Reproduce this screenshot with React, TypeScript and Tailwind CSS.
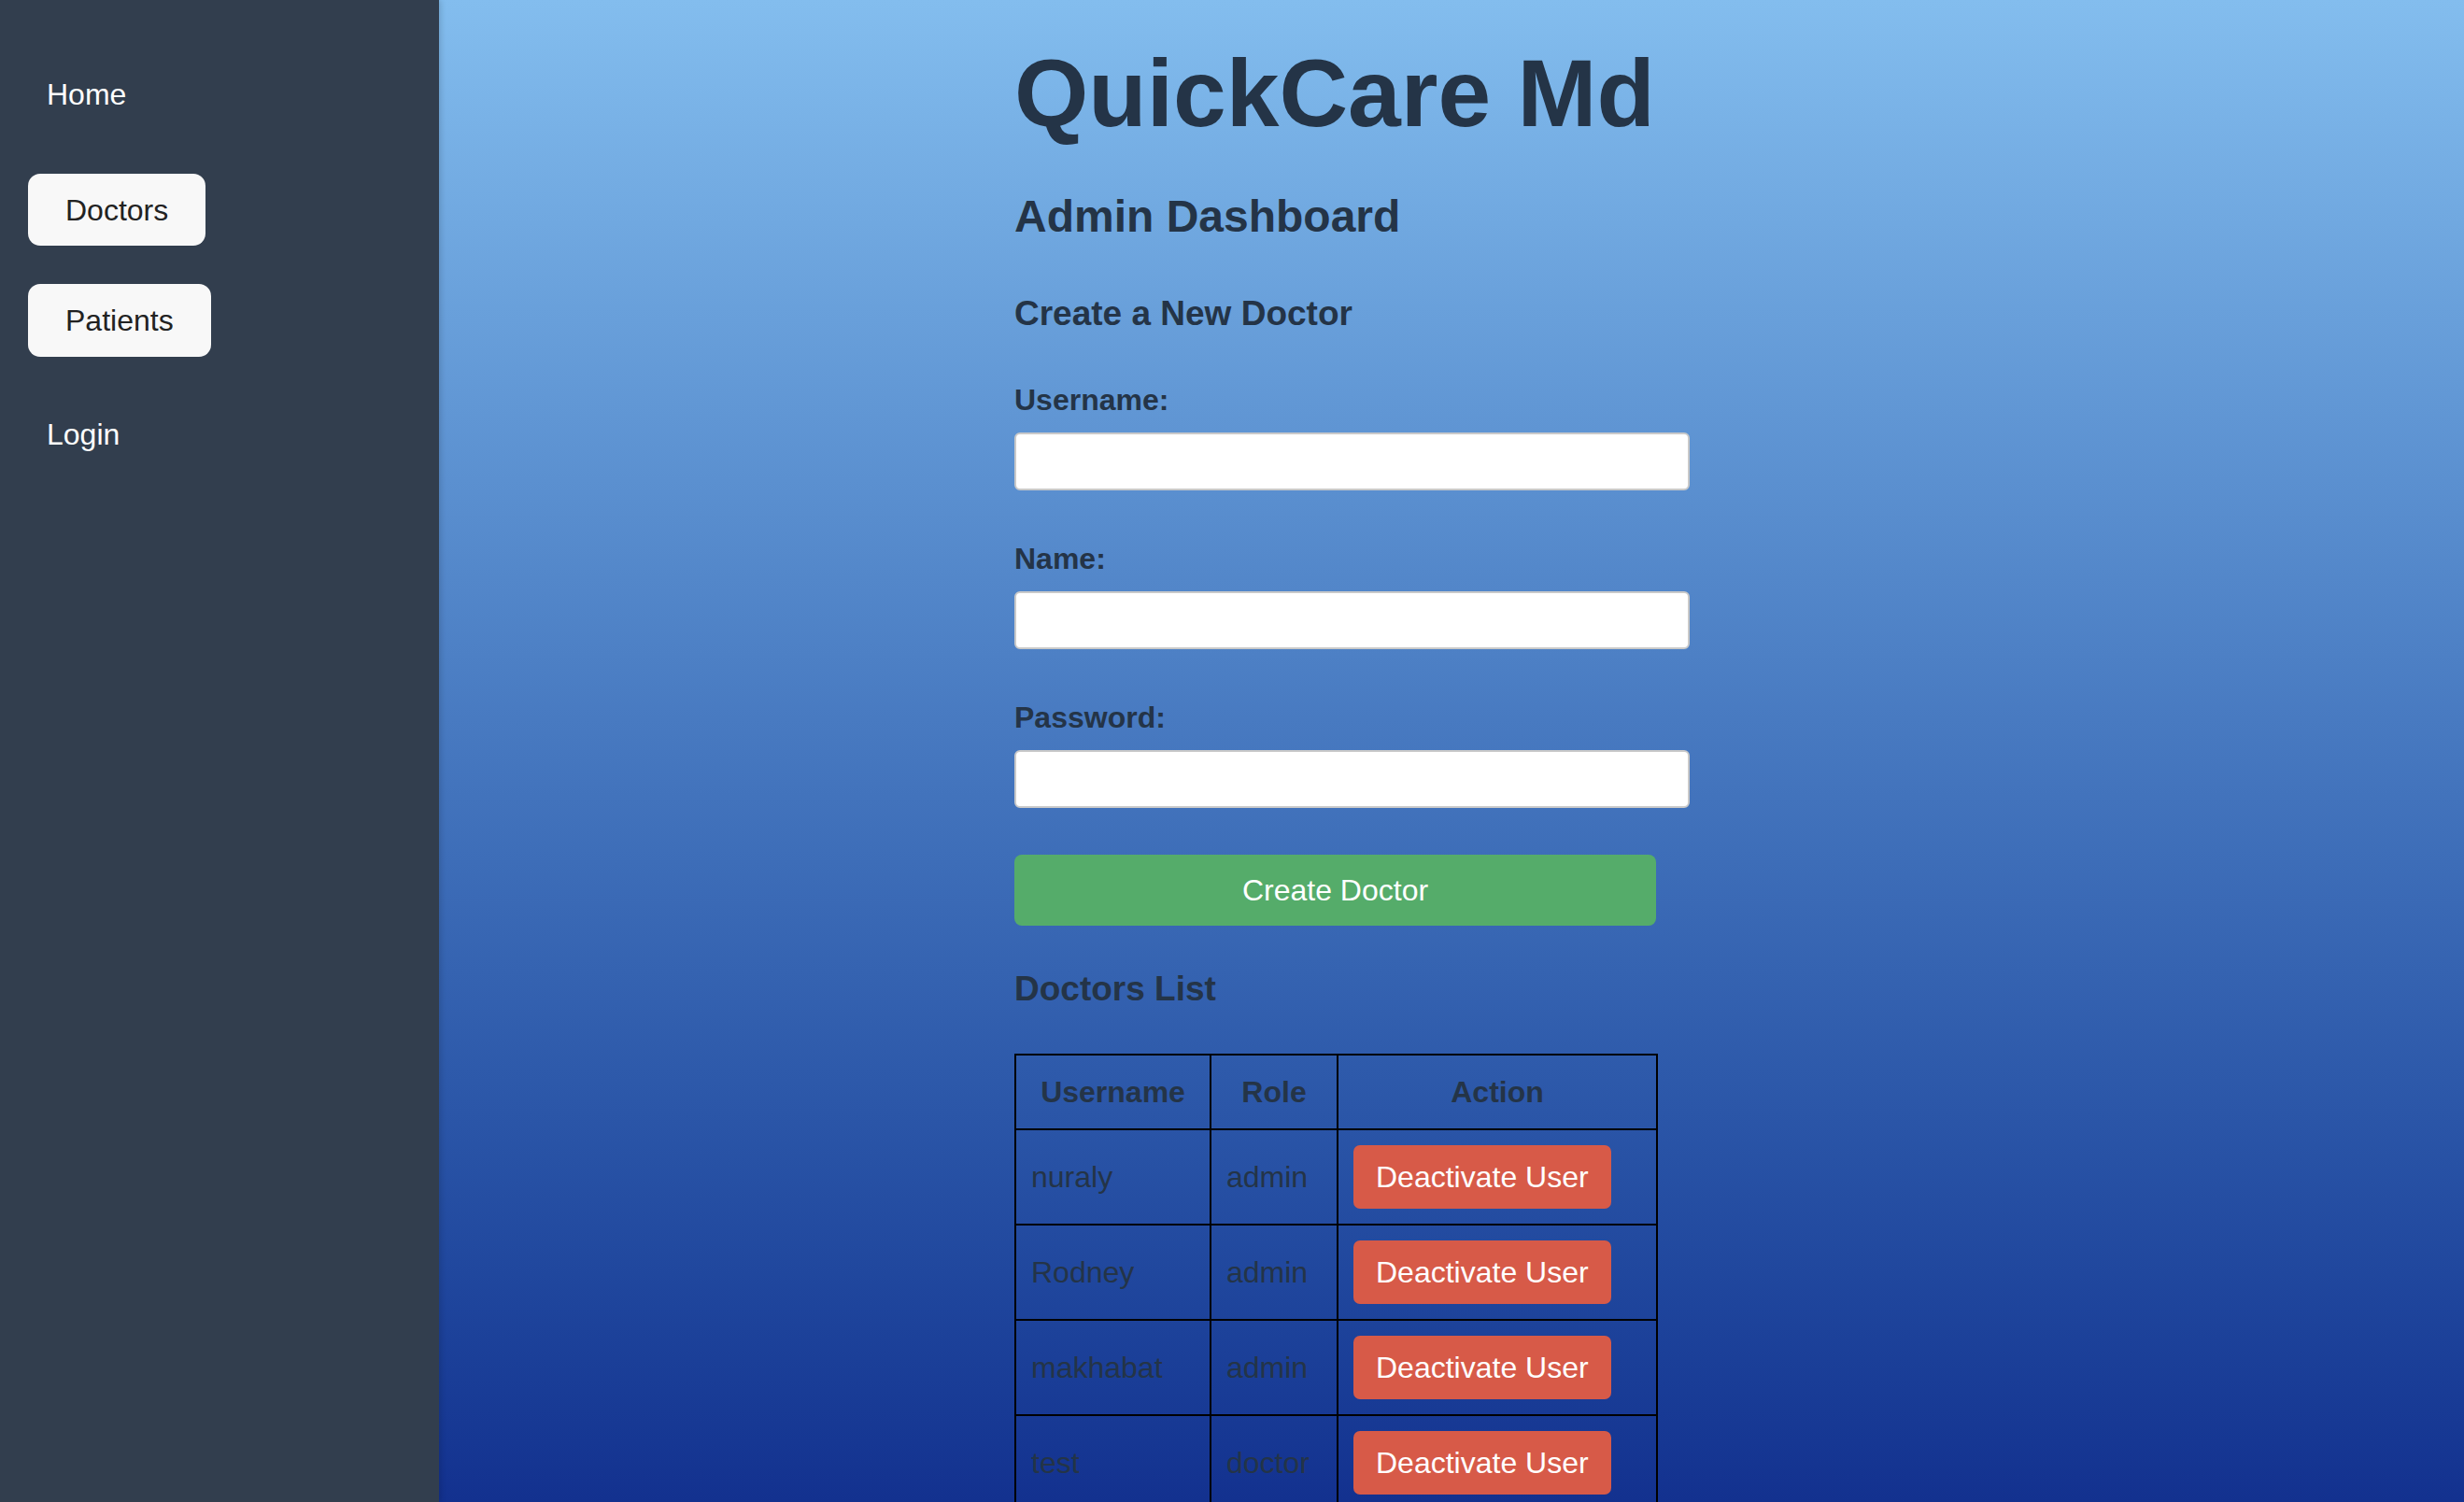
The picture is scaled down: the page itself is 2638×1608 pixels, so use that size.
const doctors = [
  { username: "nuraly", role: "admin" },
  { username: "Rodney", role: "admin" },
  { username: "makhabat", role: "admin" },
  { username: "test", role: "doctor" },
];

function Sidebar() {
  return (
    <aside className="relative z-10 flex h-full w-[470px] shrink-0 flex-col bg-[#323e4e] pt-[85px] text-[32px] leading-none shadow-[2px_0_6px_rgba(0,0,0,0.15)]">
      <a href="#" className="pl-[50px] text-white">
        Home
      </a>
      <button className="ml-[30px] mt-[69px] flex h-[77px] w-fit items-center rounded-[13px] bg-[#f8f8f8] px-[40px] text-[#222]">
        Doctors
      </button>
      <button className="ml-[30px] mt-[41px] flex h-[78px] w-fit items-center rounded-[13px] bg-[#f8f8f8] px-[40px] text-[#222]">
        Patients
      </button>
      <a href="#" className="mt-[67px] pl-[50px] text-white">
        Login
      </a>
    </aside>
  );
}

function Field({ label, type, first }: { label: string; type: string; first?: boolean }) {
  return (
    <>
      <label className={`${first ? "mt-[58px]" : "mt-[57px]"} text-[32px] font-bold leading-none`}>
        {label}
      </label>
      <input
        type={type}
        className="mt-[19px] h-[62px] w-[723px] rounded-[6px] border-2 border-[#c9c9c9] bg-white px-3 text-[28px] outline-none"
      />
    </>
  );
}

export default function App() {
  return (
    <div className="flex h-screen w-full overflow-hidden font-['Liberation_Sans',Arial,sans-serif]">
      <Sidebar />
      <main className="flex-1 overflow-hidden bg-gradient-to-b from-[#83bdee] to-[#13318f] pl-[616px] text-[#243447]">
        <div className="flex flex-col items-start pb-20">
          <h1 className="mt-[49px] text-[102px] font-bold leading-none">QuickCare Md</h1>
          <h2 className="mt-[57px] text-[48px] font-bold leading-none">Admin Dashboard</h2>
          <h3 className="mt-[61px] text-[37px] font-bold leading-none">Create a New Doctor</h3>

          <Field label="Username:" type="text" first />
          <Field label="Name:" type="text" />
          <Field label="Password:" type="password" />

          <button className="mt-[50px] flex h-[76px] w-[687px] items-center justify-center rounded-[8px] bg-[#55ac6a] text-[32px] leading-none text-white">
            Create Doctor
          </button>

          <h3 className="mt-[49px] text-[37px] font-bold leading-none">Doctors List</h3>

          <table className="mt-[51px] w-[687px] table-fixed border-collapse border-2 border-black text-[32px] leading-none">
            <colgroup>
              <col className="w-[209px]" />
              <col className="w-[136px]" />
              <col className="w-[342px]" />
            </colgroup>
            <thead>
              <tr>
                <th className="h-[80px] border-2 border-black px-[16px] text-center font-bold">Username</th>
                <th className="h-[80px] border-2 border-black px-[16px] text-center font-bold">Role</th>
                <th className="h-[80px] border-2 border-black px-[16px] text-center font-bold">Action</th>
              </tr>
            </thead>
            <tbody>
              {doctors.map((d) => (
                <tr key={d.username}>
                  <td className="border-2 border-black px-[16px] py-[16px] text-left">{d.username}</td>
                  <td className="border-2 border-black px-[16px] py-[16px] text-left">{d.role}</td>
                  <td className="border-2 border-black px-[16px] py-[16px] text-left">
                    <button className="h-[68px] rounded-[7px] bg-[#d75a48] px-[24px] text-[32px] leading-none text-white">
                      Deactivate User
                    </button>
                  </td>
                </tr>
              ))}
            </tbody>
          </table>
        </div>
      </main>
    </div>
  );
}
